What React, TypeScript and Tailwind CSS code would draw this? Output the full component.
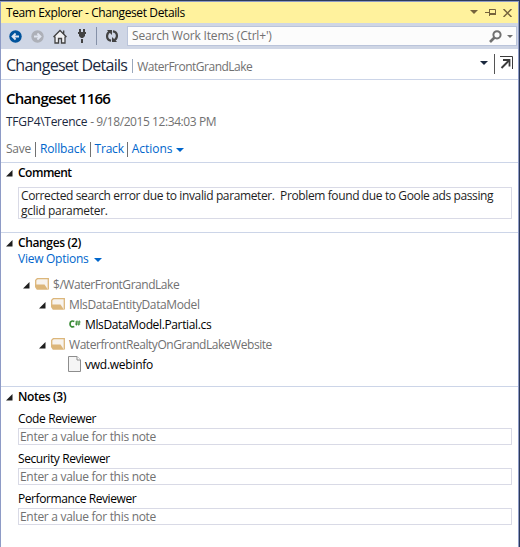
import type { ReactNode } from 'react';

function Expander() {
  return (
    <svg width="7" height="7" viewBox="0 0 7 7" className="shrink-0" fill="#1e1e1e">
      <path d="M6.5 0V6.5H0Z" />
    </svg>
  );
}

function Caret({ className }: { className: string }) {
  return (
    <svg width="8" height="4" viewBox="0 0 8 4" className={`shrink-0 ${className}`} fill="currentColor">
      <path d="M0 0H8L4 4Z" />
    </svg>
  );
}

function Folder() {
  return (
    <svg width="14" height="12" viewBox="0 0 14 12" className="shrink-0">
      <path d="M1 7V2.5L2.5 1H13V11" fill="#f7f3ee" />
      <path d="M0.7 7V2.3L2.3 0.7H13.3V11.5" fill="none" stroke="#dcb67a" strokeWidth="1.3" />
      <path d="M0 6.5H9.5L13 11.7H1.8L0 9Z" fill="#dcb67a" />
    </svg>
  );
}

function Arrow({ color, flip }: { color: string; flip?: boolean }) {
  return (
    <svg width="13" height="13" viewBox="0 0 13 13" className={flip ? 'shrink-0 -scale-x-100' : 'shrink-0'}>
      <circle cx="6.5" cy="6.5" r="6.2" fill={color} />
      <path d="M10 6.5H4M6.6 3.5L3.5 6.5L6.6 9.5" fill="none" stroke="#e0e5f0" strokeWidth="1.8" />
    </svg>
  );
}

function Section({ title, tracking, className, children }: { title: string; tracking: string; className: string; children: ReactNode }) {
  return (
    <section className={`border-t border-[#ccd5e8] pt-[2px] ${className}`}>
      <h2 className="flex h-4 items-center pl-[5px] font-semibold text-black">
        <Expander />
        <span className={`ml-[5px] ${tracking}`}>{title}</span>
      </h2>
      {children}
    </section>
  );
}

function Note({ label, tracking }: { label: string; tracking: string }) {
  return (
    <div className="mb-[6px] ml-[17px] mr-[6px]">
      <div className={`mb-px h-4 text-black ${tracking}`}>{label}</div>
      <div className="h-[17px] border border-[#d9dae6] pl-px leading-[16px] tracking-[-0.3px] text-[#717171]">Enter a value for this note</div>
    </div>
  );
}

export default function App() {
  return (
    <div className="flex h-[547px] w-[520px] flex-col overflow-hidden whitespace-nowrap border-r border-t border-[#2c3a5c] bg-white font-['Open_Sans','Noto_Sans',sans-serif] text-[12px] leading-4">
      <div className="flex flex-1 flex-col border-x border-t border-[#8e9bc6]">
        <header className="flex h-[21px] items-center bg-[#fff29d] pl-[5px] pr-[6px] text-black">
          <span className="tracking-[-0.39px]">Team Explorer - Changeset Details</span>
          <Caret className="ml-auto -mt-px text-[#75633d]" />
          <svg width="12" height="9" viewBox="0 0 12 9" className="ml-[7px]" fill="none" stroke="#75633d">
            <path d="M0 4.5H4M4.5 1V8M4.5 1.5H10.5V6.5M4.5 6.5H11" />
            <path d="M5 6H11" strokeWidth="2" />
          </svg>
          <svg width="9" height="8" viewBox="0 0 9 8" className="ml-[6px]" fill="none" stroke="#75633d" strokeWidth="1.5">
            <path d="M0.5 0L8.5 8M8.5 0L0.5 8" />
          </svg>
        </header>

        <div className="flex h-[26px] items-center bg-[#cfd6e5] pl-[8px] pr-px">
          <Arrow color="#00539c" />
          <span className="ml-[9px] flex"><Arrow color="#adb0b8" flip /></span>
          <svg width="14" height="15" viewBox="0 0 14 15" className="ml-[9px]">
            <path d="M2 7V14H5.5V9H8.5V14H12V7L7 2Z" fill="#f1f1f3" />
            <path d="M0.5 8L7 1.5L13.5 8M2 7.5V14H5.5V9.5H8.5V14H12V7.5M10.7 5V1.5" fill="none" stroke="#424242" strokeWidth="1.3" />
          </svg>
          <svg width="8" height="14" viewBox="0 0 8 14" className="ml-[11px] shrink-0" fill="#424242">
            <path d="M1 0H3V3H5V0H7V3H8V5H7V7L5 9H3L1 7V5H0V3H1ZM3 10H5V14H3Z" />
          </svg>
          <i className="ml-[10px] h-[18px] w-px bg-[#8591a8]" />
          <svg width="12" height="12" viewBox="0 0 13 13" className="ml-[9px]">
            <path d="M5.5 11.5C1.8 11 1 8.5 1.2 6C1.4 4 2.5 2.5 4.3 1.7M7.5 1.5C11.2 2 12 4.5 11.8 7C11.6 9 10.5 10.5 8.7 11.3" fill="none" stroke="#424242" strokeWidth="2.4" />
            <path d="M1 0H6.5V5.5ZM12 13H6.5V7.5Z" fill="#424242" />
          </svg>
          <div className="ml-[9px] flex h-[20px] flex-1 items-center border border-[#bac4da] bg-[#fcfcfc] pl-1 pr-[3px] text-[#717171]">
            <span className="tracking-[-0.18px]">Search Work Items (Ctrl+')</span>
            <svg width="13" height="13" viewBox="0 0 13 13" className="ml-auto" fill="none" stroke="#717171">
              <circle cx="8" cy="4.8" r="3.6" strokeWidth="2" />
              <path d="M5.5 7.5L1 12" strokeWidth="2.6" />
            </svg>
            <svg width="6" height="3" viewBox="0 0 6 3" className="ml-[5px]" fill="#717171"><path d="M0 0H6L3 3Z" /></svg>
          </div>
        </div>

        <div className="flex h-[30px] items-center pl-[5px] pr-[5px]">
          <span className="mt-[2px] text-[16px] leading-[28px] tracking-[-0.73px] text-[#1b293e]">Changeset Details</span>
          <i className="ml-[5px] mt-[4px] h-[14px] w-px bg-[#9aa8bc]" />
          <span className="ml-[4px] mt-[5px] tracking-[-0.5px] text-[#717171]">WaterFrontGrandLake</span>
          <Caret className="ml-auto -mt-[2px] text-[#1b293e]" />
          <i className="ml-[6px] h-[20px] w-px bg-[#555]" />
          <svg width="13" height="13" viewBox="0 0 13 13" className="-mt-[4px] ml-[5px]" fill="none" stroke="#3b3b3b">
            <path d="M0 0.5H12.5V13" />
            <path d="M1.5 12L9 4.5" strokeWidth="2" />
            <path d="M3 4H9.5V10.5" strokeWidth="1.8" />
          </svg>
        </div>

        <div className="h-[83px] border-t border-[#ccd5e8] pl-[5px]">
          <div className="mt-[8px] h-5 text-[15px] font-[550] leading-5 tracking-[-0.72px] text-black">Changeset 1166</div>
          <div className="mt-[6px] flex h-4 gap-[3px]">
            <span className="tracking-[-0.28px] text-[#1b293e]">TFGP4\Terence</span>
            <span className="tracking-[-0.42px] text-[#717171]">- 9/18/2015 12:34:03 PM</span>
          </div>
          <div className="mt-[11px] flex h-4 items-center text-[#0066cc]">
            <span className="tracking-[-0.25px] text-[#717171]">Save</span>
            <i className="ml-[4px] h-[15px] w-px bg-[#717171]" />
            <span className="ml-[4px] tracking-[-0.15px]">Rollback</span>
            <i className="ml-[4px] h-[15px] w-px bg-[#717171]" />
            <span className="ml-[4px] tracking-[-0.2px]">Track</span>
            <i className="ml-[3px] h-[15px] w-px bg-[#717171]" />
            <span className="ml-[4px] tracking-[-0.05px]">Actions</span>
            <Caret className="ml-[4px] mt-[2px]" />
          </div>
        </div>

        <Section title="Comment" tracking="tracking-[-0.5px]" className="h-[70px]">
          <div className="ml-[17px] mr-[6px] mt-[6px] h-[32px] border border-[#d9dae6] pl-[2px] leading-[15px] text-[#1e1e1e]">
            <div className="whitespace-pre tracking-[-0.38px]">Corrected search error due to invalid parameter.  Problem found due to Goole ads passing</div>
            <div className="tracking-[-0.29px]">gclid parameter.</div>
          </div>
        </Section>

        <Section title="Changes (2)" tracking="tracking-[-0.36px]" className="h-[154px]">
          <div className="flex h-4 items-center pl-[17px] text-[#0066cc]">
            <span className="tracking-[-0.26px]">View Options</span>
            <Caret className="ml-[5px] mt-[2px]" />
          </div>
          <div className="mt-[8px] text-[#717171]">
            <div className="flex h-5 items-center pl-[22px]">
              <Expander /><span className="-mt-[2px] ml-[5px] flex"><Folder /></span>
              <span className="ml-[4px] tracking-[-0.46px]">$/WaterFrontGrandLake</span>
            </div>
            <div className="flex h-5 items-center pl-[38px]">
              <Expander /><span className="-mt-[2px] ml-[5px] flex"><Folder /></span>
              <span className="ml-[4px] tracking-[-0.38px]">MlsDataEntityDataModel</span>
            </div>
            <div className="flex h-5 items-center pl-[68px]">
              <svg width="12" height="8" viewBox="0 0 12 8" className="-mt-[3px]" fill="none" stroke="#388a34">
                <path d="M5.3 1.5C3.5 0.5 1 1 1 4S3.5 7.3 5.3 6.5" strokeWidth="1.7" />
                <path d="M8 0.5L7.4 5.5M10.3 0.5L9.7 5.5M6.3 2H11.5M6 4H11.2" />
              </svg>
              <span className="ml-[4px] tracking-[-0.36px] text-black">MlsDataModel.Partial.cs</span>
            </div>
            <div className="flex h-5 items-center pl-[38px]">
              <Expander /><span className="-mt-[2px] ml-[5px] flex"><Folder /></span>
              <span className="ml-[4px] tracking-[-0.45px]">WaterfrontRealtyOnGrandLakeWebsite</span>
            </div>
            <div className="flex h-5 items-center pl-[67px]">
              <svg width="13" height="16" viewBox="0 0 13 16" className="-mt-[2px]" stroke="#8d8d8d">
                <path d="M0.5 0.5H9L12.5 4V15.5H0.5Z" fill="#f5f5f5" />
                <path d="M9 0.5V4H12.5" fill="#fff" />
              </svg>
              <span className="ml-[4px] tracking-[-0.25px] text-black">vwd.webinfo</span>
            </div>
          </div>
        </Section>

        <Section title="Notes (3)" tracking="tracking-[-0.4px]" className="flex-1">
          <div className="h-[6px]" />
          <Note label="Code Reviewer" tracking="tracking-[-0.36px]" />
          <Note label="Security Reviewer" tracking="tracking-[-0.4px]" />
          <Note label="Performance Reviewer" tracking="tracking-[-0.42px]" />
        </Section>
      </div>
    </div>
  );
}
